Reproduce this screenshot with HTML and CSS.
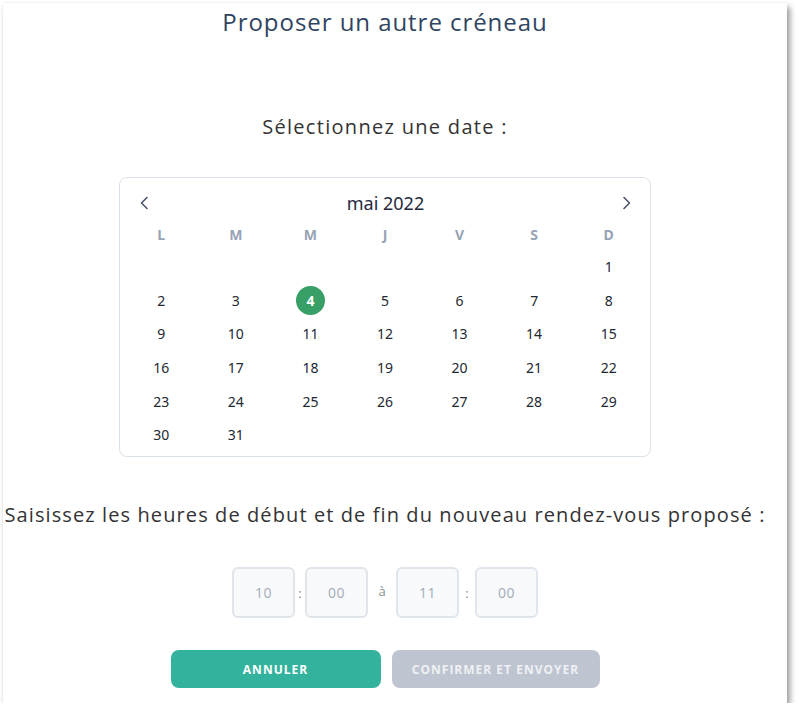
FILE: index.html
```html
<!DOCTYPE html>
<html lang="fr">
<head>
<meta charset="utf-8">
<title>Proposer un autre créneau</title>
<link rel="stylesheet" href="styles.css">
</head>
<body>
<div class="card">
  <h1 class="title">Proposer un autre créneau</h1>
  <p class="label label-date">Sélectionnez une date :</p>
  <div class="calendar">
    <div class="cal-head">
      <button class="nav" aria-label="Mois précédent">
        <svg width="16" height="16" viewBox="0 0 16 16"><polyline points="10,2.5 4.5,8 10,13.5" fill="none" stroke="#4a5568" stroke-width="1.6" stroke-linecap="round" stroke-linejoin="round"/></svg>
      </button>
      <span class="month">mai 2022</span>
      <button class="nav" aria-label="Mois suivant">
        <svg width="16" height="16" viewBox="0 0 16 16"><polyline points="6,2.5 11.5,8 6,13.5" fill="none" stroke="#4a5568" stroke-width="1.6" stroke-linecap="round" stroke-linejoin="round"/></svg>
      </button>
    </div>
    <div class="grid weekdays">
      <span>L</span><span>M</span><span>M</span><span>J</span><span>V</span><span>S</span><span>D</span>
    </div>
    <div class="grid days">
      <span></span><span></span><span></span><span></span><span></span><span></span><span>1</span>
      <span>2</span><span>3</span><span class="sel"><b>4</b></span><span>5</span><span>6</span><span>7</span><span>8</span>
      <span>9</span><span>10</span><span>11</span><span>12</span><span>13</span><span>14</span><span>15</span>
      <span>16</span><span>17</span><span>18</span><span>19</span><span>20</span><span>21</span><span>22</span>
      <span>23</span><span>24</span><span>25</span><span>26</span><span>27</span><span>28</span><span>29</span>
      <span>30</span><span>31</span><span></span><span></span><span></span><span></span><span></span>
    </div>
  </div>
  <p class="label label-time">Saisissez les heures de début et de fin du nouveau rendez-vous proposé :</p>
  <div class="times">
    <div class="tbox">10</div>
    <span class="sep sep-a">:</span>
    <div class="tbox">00</div>
    <span class="sep sep-b">à</span>
    <div class="tbox">11</div>
    <span class="sep sep-c">:</span>
    <div class="tbox">00</div>
  </div>
  <div class="actions">
    <button class="btn btn-cancel">ANNULER</button>
    <button class="btn btn-confirm">CONFIRMER ET ENVOYER</button>
  </div>
</div>
</body>
</html>
```

FILE: styles.css
```css
* { box-sizing: border-box; }

body {
  margin: 0;
  background: #ffffff;
  font-family: "Open Sans", "Noto Sans", sans-serif;
}

.card {
  margin: 3px 0 0 3px;
  width: 784px;
  height: 700px;
  padding: 0 20px 0 0;
  background: #ffffff;
  box-shadow: 3px 4px 6px rgba(0, 0, 0, 0.4), 0 0 2px rgba(0, 0, 0, 0.08);
  display: flex;
  flex-direction: column;
  align-items: center;
}

.title {
  margin: 4px 0 0;
  font-size: 24px;
  line-height: 30px;
  font-weight: 400;
  color: #2f4461;
  letter-spacing: 0.95px;
}

.label {
  margin: 0;
  font-size: 20px;
  line-height: 26px;
  color: #333333;
  white-space: nowrap;
}

.label-date {
  margin-top: 77px;
  letter-spacing: 1.3px;
}

.calendar {
  margin-top: 37px;
  width: 532px;
  height: 280px;
  border: 1px solid #dbe1e8;
  border-radius: 8px;
  padding: 13px 4px 0;
  font-family: "Noto Sans", "Open Sans", sans-serif;
}

.cal-head {
  height: 24px;
  display: flex;
  align-items: center;
  justify-content: space-between;
  padding: 0 12px 0 13px;
}

.nav {
  border: 0;
  background: none;
  padding: 0;
  width: 16px;
  height: 16px;
  display: flex;
}

.month {
  font-size: 18px;
  color: #1f2a3c;
}

.grid {
  display: grid;
  grid-template-columns: repeat(7, 1fr);
}

.weekdays {
  margin-top: 9px;
  height: 20px;
  align-items: center;
}

.weekdays span {
  text-align: center;
  font-size: 14px;
  font-weight: 700;
  color: #97a3b6;
}

.days {
  margin-top: 6px;
  grid-auto-rows: 33.6px;
}

.days span {
  display: flex;
  align-items: center;
  justify-content: center;
  font-size: 14px;
  color: #222831;
}

.days .sel b {
  width: 29px;
  height: 29px;
  border-radius: 50%;
  background: #389f67;
  color: #ffffff;
  font-weight: 700;
  display: flex;
  align-items: center;
  justify-content: center;
}

.label-time {
  margin-top: 45px;
  letter-spacing: 1.1px;
}

.times {
  margin-top: 39px;
  display: flex;
  align-items: center;
}

.tbox {
  width: 63px;
  height: 51px;
  border: 2px solid #e0e5ec;
  border-radius: 6px;
  background: #f7f9fb;
  display: flex;
  align-items: center;
  justify-content: center;
  font-size: 14px;
  color: #a3abb7;
  letter-spacing: 0.5px;
}

.sep {
  text-align: center;
  font-size: 13px;
  color: #8a8f96;
}

.sep-a { width: 10px; }
.sep-b { width: 28px; padding-bottom: 4px; }
.sep-c { width: 16px; }

.actions {
  margin-top: 32px;
  display: flex;
  gap: 11px;
}

.btn {
  height: 38px;
  border: 0;
  border-radius: 8px;
  font-family: "Open Sans", sans-serif;
  font-size: 12px;
  font-weight: 700;
  letter-spacing: 1px;
  color: #ffffff;
}

.btn-cancel {
  width: 210px;
  background: #33b39e;
}

.btn-confirm {
  width: 208px;
  background: #bec5d0;
  color: #eef0f3;
}
```
